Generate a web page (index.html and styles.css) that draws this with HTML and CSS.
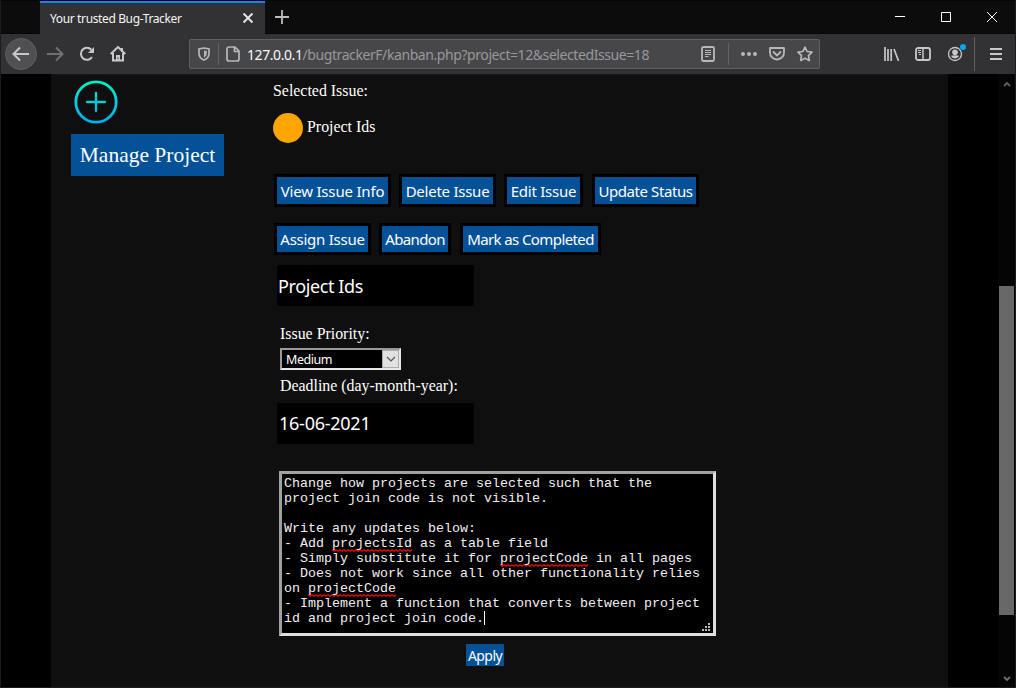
FILE: index.html
```html
<!DOCTYPE html>
<html lang="en">
<head>
<meta charset="utf-8">
<title>Your trusted Bug-Tracker</title>
<link rel="stylesheet" href="styles.css">
</head>
<body>
<div class="window">
  <header class="titlebar">
    <div class="tab">
      <span class="tab-title">Your trusted Bug-Tracker</span>
      <svg class="tab-close" width="12" height="12" viewBox="0 0 12 12"><path d="M1.500 1.500l9 9M10.500 1.500l-9 9" stroke="#e8e8e8" stroke-width="1.800"/></svg>
    </div>
    <svg class="new-tab" width="14" height="14" viewBox="0 0 14 14"><path d="M7 0v14M0 7h14" stroke="#bdbdbd" stroke-width="1.800"/></svg>
    <div class="controls">
      <svg width="10" height="12" viewBox="0 0 10 12"><path d="M0 4.500h10" stroke="#fff"/></svg>
      <svg width="10" height="10" viewBox="0 0 10 10"><path d="M.5.5h9v9h-9z" fill="none" stroke="#fff"/></svg>
      <svg width="10" height="10" viewBox="0 0 10 10"><path d="M0 0l10 10M10 0L0 10" stroke="#fff"/></svg>
    </div>
  </header>

  <nav class="toolbar">
    <span class="back"><svg width="18" height="16" viewBox="0 0 18 16"><path d="M17 8H2M8 1.500L1.500 8 8 14.500" fill="none" stroke="#c8c8c9" stroke-width="2"/></svg></span>
    <svg class="forward" width="18" height="16" viewBox="0 0 18 16"><path d="M1 8h15M10 1.500L16.500 8 10 14.500" fill="none" stroke="#707072" stroke-width="2"/></svg>
    <svg class="reload" width="16" height="16" viewBox="0 0 16 16"><path d="M12.300 3.700A6 6 0 1 0 13 11" fill="none" stroke="#c8c8c9" stroke-width="2"/><path d="M15 1v6H9z" fill="#c8c8c9"/></svg>
    <svg class="home" width="16" height="16" viewBox="0 0 16 16"><path d="M.7 8L8 1l7.300 7M3 7v7.500h10V7" fill="none" stroke="#c8c8c9" stroke-width="2"/><path d="M6 15V9h4v6zM11 2h2v4h-2z" fill="#c8c8c9"/><path d="M8 11.500v1.500" stroke="#323234"/></svg>
    <div class="urlbar">
      <svg class="shield" width="12" height="14" viewBox="0 0 12 14"><path d="M6 1L1 2v4c0 3.500 2 6 5 7 3-1 5-3.500 5-7V2z" fill="none" stroke="#b8b8b9" stroke-width="1.700"/><path d="M6 3.500v7c2-1 2.800-2.500 2.800-5V4z" fill="#b8b8b9"/></svg>
      <i class="divider"></i>
      <svg class="page-icon" width="14" height="16" viewBox="0 0 14 16"><path d="M9 1H3a2 2 0 0 0-2 2v10a2 2 0 0 0 2 2h8a2 2 0 0 0 2-2V5zM8.500 1v4.500H13" fill="none" stroke="#b8b8b9" stroke-width="1.700" stroke-linejoin="round"/></svg>
      <span class="url"><b>127.0.0.1</b>/bugtrackerF/kanban.php?project=12&amp;selectedIssue=18</span>
      <svg class="reader" width="14" height="16" viewBox="0 0 14 16"><rect x="1" y="1" width="12" height="14" rx="1.500" fill="none" stroke="#b8b8b9" stroke-width="1.800"/><path d="M4 4.500h6M4 6.500h6M4 8.500h6M4 10.500h3.500" stroke="#b8b8b9"/></svg>
      <i class="divider"></i>
      <svg class="dots" width="16" height="4" viewBox="0 0 16 4"><g fill="#b8b8b9"><circle cx="2" cy="2" r="2"/><circle cx="8" cy="2" r="2"/><circle cx="14" cy="2" r="2"/></g></svg>
      <svg class="pocket" width="16" height="14" viewBox="0 0 16 14"><path d="M1 1h14v4.500a7 7 0 0 1-14 0z" fill="none" stroke="#b8b8b9" stroke-width="1.800" stroke-linejoin="round"/><path d="M4.500 5L8 8.500 11.500 5" fill="none" stroke="#b8b8b9" stroke-width="1.800" stroke-linecap="round"/></svg>
      <svg class="star" width="16" height="16" viewBox="0 0 16 16"><path d="M8 1.200l2.100 4.300 4.900.700-3.500 3.400.8 4.800L8 12.200l-4.300 2.200.8-4.800L1 6.200l4.900-.7z" fill="none" stroke="#b8b8b9" stroke-width="1.700" stroke-linejoin="round"/></svg>
    </div>
    <svg class="library" width="16" height="14" viewBox="0 0 16 14"><path d="M1 0v14M4 2v12M7.200 2v12M10 2l4.500 11.800" stroke="#c8c8c9" stroke-width="1.700"/></svg>
    <svg class="sidebar-icon" width="16" height="14" viewBox="0 0 16 14"><rect x="1" y="1" width="14" height="12" rx="2" fill="none" stroke="#c8c8c9" stroke-width="1.800"/><path d="M8 1v12" stroke="#c8c8c9" stroke-width="1.500"/><path d="M3 3.500h3M3 5.500h3M4 7.500h2" stroke="#c8c8c9"/></svg>
    <svg class="account" width="20" height="20" viewBox="0 0 20 20"><circle cx="8" cy="11" r="6.500" fill="none" stroke="#c8c8c9" stroke-width="1.300"/><circle cx="8" cy="9.200" r="2.800" fill="#c8c8c9"/><path d="M3.800 12.800q4.200-1 8.400 0a4.700 4.700 0 0 1-8.400 0z" fill="#c8c8c9"/><circle cx="16" cy="4" r="3" fill="#00a8f5"/></svg>
    <i class="bar-divider"></i>
    <svg class="menu" width="12" height="12" viewBox="0 0 12 12"><path d="M0 1h12M0 6h12M0 11h12" stroke="#c8c8c9" stroke-width="2"/></svg>
  </nav>

  <main class="viewport">
    <div class="page">
      <aside class="side">
        <svg class="add" width="44" height="44" viewBox="0 0 44 44"><defs><linearGradient id="aqua" gradientUnits="userSpaceOnUse" x1="0" y1="0" x2="0" y2="44"><stop offset="0" stop-color="#00f2c3"/><stop offset="1" stop-color="#00a8f4"/></linearGradient></defs><g fill="none" stroke="url(#aqua)" stroke-linecap="round"><circle cx="22" cy="22" r="20.200" stroke-width="2.800"/><path d="M22 13v18M13 22h18" stroke-width="2.300"/></g></svg>
        <a class="manage">Manage Project</a>
      </aside>
      <section class="issue">
        <div class="selected">Selected Issue:</div>
        <div class="issue-name"><i class="dot"></i><span>Project Ids</span></div>
        <div class="actions">
          <button class="action view">View Issue Info</button>
          <button class="action delete">Delete Issue</button>
          <button class="action edit">Edit Issue</button>
          <button class="action update">Update Status</button>
        </div>
        <div class="actions second">
          <button class="action assign">Assign Issue</button>
          <button class="action abandon">Abandon</button>
          <button class="action mark">Mark as Completed</button>
        </div>
        <div class="field name-field">Project Ids</div>
        <div class="label priority-label">Issue Priority:</div>
        <div class="select"><span>Medium</span><i class="select-arrow"><svg width="10" height="6" viewBox="0 0 10 6"><path d="M1 1l4 4 4-4" fill="none" stroke="#555" stroke-width="1.200"/></svg></i></div>
        <div class="label deadline-label">Deadline (day-month-year):</div>
        <div class="field date-field">16-06-2021</div>
        <div class="textarea">Change how projects are selected such that the
project join code is not visible.

Write any updates below:
- Add <u>projectsId</u> as a table field
- Simply substitute it for <u>projectCode</u> in all pages
- Does not work since all other functionality relies
on <u>projectCode</u>
- Implement a function that converts between project
id and project join code.<i class="caret"></i><svg class="grip" width="8" height="8" viewBox="0 0 8 8"><path d="M6 0h2v2H6zM3 3h2v2H3zM6 3h2v2H6zM0 6h2v2H0zM3 6h2v2H3zM6 6h2v2H6z" fill="#bbb"/></svg></div>
        <button class="apply">Apply</button>
      </section>
    </div>
    <div class="scrollbar">
      <svg width="8" height="6" viewBox="0 0 8 6"><path d="M1 5l3-3 3 3" fill="none" stroke="#606060" stroke-width="1.800"/></svg>
      <i class="thumb"></i>
      <svg width="8" height="6" viewBox="0 0 8 6"><path d="M1 1l3 3 3-3" fill="none" stroke="#707070" stroke-width="1.800"/></svg>
    </div>
  </main>
</div>
</body>
</html>
```
FILE: styles.css
```css
* { box-sizing: border-box; }
body { margin: 0; background: #000; }
svg { display: block; flex: none; }
i { display: block; flex: none; }
.window { width: 1016px; height: 688px; overflow: hidden; display: flex; flex-direction: column; border: 1px solid #1b1b20; border-top-color: #050505; }

.titlebar { height: 33px; flex: none; display: flex; background: #0c0c0c; border-bottom: 1px solid #060608; font-family: "Noto Sans", sans-serif; }
.tab { width: 225px; height: 33px; margin-left: 39px; background: #323234; border-top: 2px solid #0a84ff; display: flex; align-items: center; padding: 0 11px 2px 10px; }
.tab-title { flex: 1; padding-top: 2px; font-size: 12px; letter-spacing: -0.37px; color: #f5f5f5; white-space: nowrap; }
.new-tab { margin: 9px 0 0 10px; }
.controls { margin-left: auto; margin-right: 18px; padding-top: 11px; display: flex; gap: 36px; }

.toolbar { height: 40px; flex: none; background: #323234; display: flex; align-items: center; }
.back { width: 32px; height: 32px; margin-left: 4px; border-radius: 50%; background: #505052; border: 1px solid #5f5f61; display: flex; align-items: center; justify-content: center; flex: none; }
.forward { margin-left: 9px; }
.reload { margin-left: 15px; }
.home { margin-left: 15px; }
.urlbar { width: 631px; height: 30px; margin-left: 63px; flex: none; background: #474749; border: 1px solid #606062; border-radius: 2px; display: flex; align-items: center; }
.shield { margin-left: 8px; }
.divider { width: 1px; height: 22px; background: #61636b; margin-left: 8px; }
.page-icon { margin-left: 7px; }
.url { width: 454px; margin-left: 7px; padding-top: 1px; font: 14px "Noto Sans", sans-serif; letter-spacing: -0.42px; color: #98989a; white-space: nowrap; }
.url b { font-weight: 400; color: #f9f9fa; }
.reader + .divider { margin-left: 13px; }
.dots { margin-left: 12px; }
.pocket { margin-left: 12px; }
.star { margin-left: 12px; }
.library { margin-left: 64px; }
.sidebar-icon { margin-left: 15px; }
.account { margin: -2px 0 0 16px; }
.bar-divider { width: 1px; height: 34px; margin-left: 7px; background: #606062; }
.menu { margin-left: 15px; }

.viewport { height: 613px; flex: none; display: flex; background: #000; }
.page { width: 897px; margin-left: 50px; background: #0f0f0f; display: flex; border-top: 1px solid #151515; }
.side { width: 222px; padding: 5px 0 0 20px; }
.add { margin-left: 3px; }
.manage { display: block; width: 153px; height: 42px; margin-top: 10px; background: #045198; color: #fff; text-align: center; font: 21.5px/42px "Liberation Serif", serif; white-space: nowrap; }
.issue { width: 500px; color: #fff; font: 15.9px/18px "Liberation Serif", serif; }
.selected { margin-top: 7px; }
.issue-name { display: flex; align-items: center; gap: 4px; height: 30px; margin-top: 13px; }
.issue-name span { height: 20px; }
.dot { width: 30px; height: 30px; border-radius: 50%; background: orange; }
.actions { display: flex; margin: 31px 0 0 1px; }
.actions.second { margin-top: 16px; }
.action, .apply { background: #045198; color: #fff; border: 3px solid #000; padding: 0; height: 33px; font: 15px/20px "Noto Sans", sans-serif; white-space: nowrap; letter-spacing: -0.25px; }
.second .action { height: 32px; }
.view { width: 117px; letter-spacing: -0.18px; }
.delete { width: 97px; margin-left: 8px; }
.edit { width: 79px; margin-left: 8px; }
.update { width: 107px; margin-left: 9px; letter-spacing: -0.42px; }
.assign { width: 97px; }
.abandon { width: 72px; margin-left: 8px; letter-spacing: -0.65px; }
.mark { width: 141px; margin-left: 9px; letter-spacing: -0.6px; }
.field { width: 197px; height: 41px; margin-left: 4px; padding-left: 1px; background: #000; border-radius: 2px; font: 18px/42px "Noto Sans", sans-serif; letter-spacing: -0.4px; }
.name-field { margin-top: 10px; }
.label { margin-left: 7px; }
.priority-label { margin-top: 19px; }
.select { width: 121px; height: 22px; margin: 5px 0 0 7px; padding-left: 4px; border: 2px solid; border-color: #9a9a9a #e8e8e8 #e8e8e8 #9a9a9a; background: #000; display: flex; justify-content: space-between; font: 12.5px/19px "Noto Sans", sans-serif; letter-spacing: -0.45px; }
.select-arrow { width: 17px; height: 18px; background: #e1e1e1; border: 1px solid #acacac; display: flex; align-items: center; justify-content: center; }
.deadline-label { margin-top: 7px; }
.date-field { margin-top: 8px; line-height: 40px; padding-left: 2px; letter-spacing: -0.25px; }
.textarea { position: relative; width: 437px; height: 165px; margin: 27px 0 0 6px; padding: 2px 2px; border: 3px solid; border-color: #a0a0a0 #dedede #dedede #a0a0a0; background: #000; color: #f0f0f0; font: 13.333px/15px "Liberation Mono", monospace; white-space: pre; }
.textarea u { text-decoration: none; padding-bottom: 1px; background: url("data:image/svg+xml,%3Csvg xmlns='http://www.w3.org/2000/svg' width='4' height='3'%3E%3Cpath d='M-1 1.500L0 .8L2 2.200L4 .8L5 1.500' fill='none' stroke='red' stroke-width='1.300'/%3E%3C/svg%3E") repeat-x left bottom; }
.caret { display: inline-block; width: 1px; height: 14px; background: #fff; vertical-align: -3px; }
.grip { position: absolute; right: 3px; bottom: 2px; }
.apply { display: block; border: 0; width: 38px; height: 22px; margin: 8px 0 0 193px; padding-top: 1px; font-size: 14px; line-height: 21px; letter-spacing: -0.55px; }
.scrollbar { width: 17px; margin-left: 50px; background: #050506; display: flex; flex-direction: column; align-items: center; padding: 7px 0 5px; }
.thumb { width: 15px; height: 329px; margin: 199px 0 auto; background: #686868; }
```
